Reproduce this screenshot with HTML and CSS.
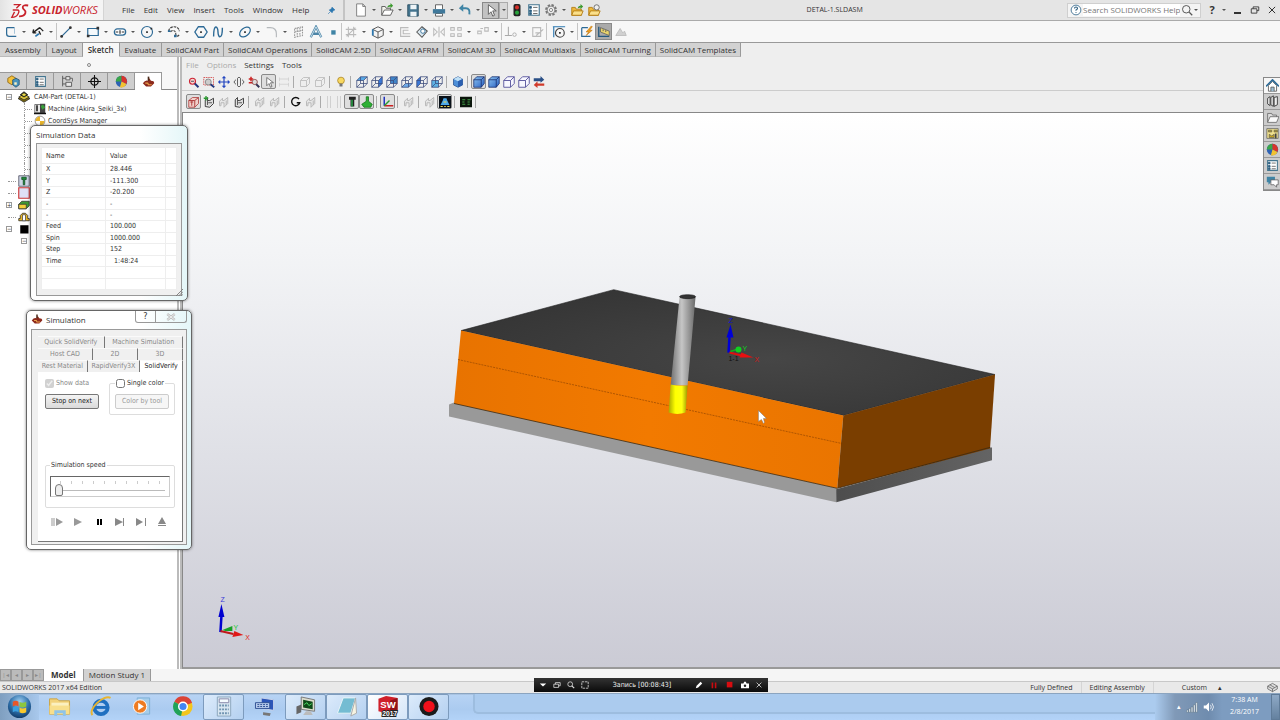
FILE: index.html
```
<!DOCTYPE html>
<html lang="en">
<head>
  <meta charset="UTF-8">
  <meta name="viewport" content="width=device-width, initial-scale=1.0">
  <title>DETAL-1.SLDASM</title>
  <link rel="stylesheet" href="styles.css">
</head>
<body>
  <!-- icon sprite -->
  <svg class="sprite" aria-hidden="true">
    <defs>
      <linearGradient id="blueFace" x1="0" y1="0" x2="1" y2="1"><stop offset="0" stop-color="#8cc4f0"/><stop offset="1" stop-color="#2a62c4"/></linearGradient>
      <radialGradient id="orb" cx=".5" cy=".3" r=".7"><stop offset="0" stop-color="#9fd0f2"/><stop offset=".6" stop-color="#2c6da8"/><stop offset="1" stop-color="#123d6b"/></radialGradient>
      <radialGradient id="topFace" cx=".58" cy=".55" r=".6"><stop offset="0" stop-color="#464646"/><stop offset="1" stop-color="#363636"/></radialGradient>
      <linearGradient id="frontFace"><stop offset="0" stop-color="#e87300"/><stop offset=".5" stop-color="#f27a00"/><stop offset="1" stop-color="#ea7500"/></linearGradient>
      <linearGradient id="plateSide"><stop offset="0" stop-color="#4d4d4d"/><stop offset="1" stop-color="#646464"/></linearGradient>
      <linearGradient id="shank"><stop offset="0" stop-color="#707070"/><stop offset=".45" stop-color="#c6c6c6"/><stop offset="1" stop-color="#6a6a6a"/></linearGradient>
      <linearGradient id="flute"><stop offset="0" stop-color="#a8a800"/><stop offset=".35" stop-color="#ffff00"/><stop offset=".7" stop-color="#ffff10"/><stop offset="1" stop-color="#989800"/></linearGradient>
    </defs>
    <symbol id="i-sketch" viewBox="0 0 16 16"><path d="M3 3v7q0 3 3 3h8M3 3h9" fill="none" stroke="#2d6a96" stroke-width="1.4"/><path d="M12 3v7" stroke="#9bbdd3" stroke-width="1"/></symbol>
    <symbol id="i-dim" viewBox="0 0 16 16"><path d="M2 9L10 3M2 9l1-4M2 9h4M10 3l4 4M9 7l2 4" fill="none" stroke="#222" stroke-width="1.500"/><path d="M5 13l4-3" stroke="#2d78b0" stroke-width="2"/></symbol>
    <symbol id="i-line" viewBox="0 0 16 16"><path d="M3 13L13 3" stroke="#2d6a96" stroke-width="1.4"/><circle cx="3" cy="13" r="1.6" fill="#333"/><circle cx="13" cy="3" r="1.6" fill="#333"/></symbol>
    <symbol id="i-rect" viewBox="0 0 16 16"><path d="M2 4h12v8H2z" fill="#f4f9fc" stroke="#2d6a96" stroke-width="1.4"/><path d="M1 11h3v3H1zM12 2h3v3h-3z" fill="#333"/></symbol>
    <symbol id="i-slot" viewBox="0 0 16 16"><rect x="1.500" y="4.500" width="13" height="7" rx="3.500" fill="#fff" stroke="#2d6a96" stroke-width="1.400"/><path d="M3 8h3M10 8h3M8 6v4" stroke="#333" stroke-width="1.400"/></symbol>
    <symbol id="i-circle" viewBox="0 0 16 16"><circle cx="8" cy="8" r="6.300" fill="none" stroke="#2d6a96" stroke-width="1.300"/><path d="M7 7h2v2H7zM12 3h2v2h-2z" fill="#333"/></symbol>
    <symbol id="i-arc" viewBox="0 0 16 16"><path d="M2 7a6 5 0 0 1 12 0M4 8c2-3 6-2 6 2s3 3 4 1" fill="none" stroke="#444" stroke-width="1.300" stroke-dasharray="3 1"/><path d="M8 11h3v3H8zM1 6h3v2H1z" fill="#2d6a96"/></symbol>
    <symbol id="i-hex" viewBox="0 0 16 16"><path d="M5 2h6l4 6-4 6H5L1 8z" fill="none" stroke="#2d6a96" stroke-width="1.500"/><path d="M7 7h2v2H7z" fill="#333"/></symbol>
    <symbol id="i-spline" viewBox="0 0 16 16"><path d="M3 13C3-2 8 1 8 8s5 9 5-5" fill="none" stroke="#2d6a96" stroke-width="1.600"/></symbol>
    <symbol id="i-ellipse" viewBox="0 0 16 16"><ellipse cx="8" cy="8" rx="7" ry="4.500" transform="rotate(-40 8 8)" fill="none" stroke="#2d6a96" stroke-width="1.400"/><path d="M7 7h2v2H7z" fill="#333"/></symbol>
    <symbol id="i-fillet" viewBox="0 0 16 16"><path d="M2 3h4q7 0 7 7v4" fill="none" stroke="#b5b9bc" stroke-width="1.300"/></symbol>
    <symbol id="i-plane" viewBox="0 0 16 16"><path d="M3 4l9-2v10l-9 2zM6 3v11M9 3v10M3 8l9-2" fill="none" stroke="#999" stroke-width="1.200" stroke-dasharray="2 1"/></symbol>
    <symbol id="i-text" viewBox="0 0 16 16"><path d="M2 14L8 2l6 12M5 10h6" fill="none" stroke="#4d86a8" stroke-width="2.600"/><path d="M2 14L8 2l6 12" fill="none" stroke="#dcebf3" stroke-width="1"/></symbol>
    <symbol id="i-point" viewBox="0 0 16 16"><path d="M6 6h5v5H6z" fill="#3f84a5"/></symbol>
    <symbol id="i-trim" viewBox="0 0 16 16"><path d="M2 5h12M2 11h12M5 2v12M11 2v12M3 13L13 3" fill="none" stroke="#bbb" stroke-width="1.200"/></symbol>
    <symbol id="i-cube" viewBox="0 0 16 16"><path d="M2 5l6-3 6 3v7l-6 3-6-3zM2 5l6 3 6-3M8 8v7" fill="#f4f4f4" stroke="#555" stroke-width="1.100"/><path d="M2 5v7" stroke="#2d78b0" stroke-width="2"/></symbol>
    <symbol id="i-offset" viewBox="0 0 16 16"><path d="M12 3H3v10h11M12 6H6v4h8" fill="none" stroke="#bbb" stroke-width="1.300"/></symbol>
    <symbol id="i-convert" viewBox="0 0 16 16"><path d="M2 8l6-6 6 5-6 7z" fill="#dce9f1" stroke="#555" stroke-width="1.200"/><circle cx="9" cy="7" r="2.500" fill="#fff" stroke="#2d6a96"/></symbol>
    <symbol id="i-mirror" viewBox="0 0 16 16"><path d="M8 2v12M2 4v8l4-4zM14 4v8l-4-4z" fill="none" stroke="#bbb" stroke-width="1.200"/></symbol>
    <symbol id="i-pattern" viewBox="0 0 16 16"><path d="M2 3h4v3H2zM10 3h4v3h-4zM2 10h4v3H2zM10 10h4v3h-4z" fill="none" stroke="#bbb" stroke-width="1.200"/></symbol>
    <symbol id="i-move" viewBox="0 0 16 16"><path d="M2 7h4v3H2zM10 3h4v4h-4zM5 4h3" fill="none" stroke="#bbb" stroke-width="1.200"/></symbol>
    <symbol id="i-rel" viewBox="0 0 16 16"><path d="M5 2v10M1 12h8" fill="none" stroke="#aaa" stroke-width="1.200"/><circle cx="12" cy="11" r="2" fill="none" stroke="#aaa"/></symbol>
    <symbol id="i-repair" viewBox="0 0 16 16"><path d="M2 3h9v10H2zM6 12l8-7M5 9h6" fill="none" stroke="#bbb" stroke-width="1.300"/></symbol>
    <symbol id="i-snap" viewBox="0 0 16 16"><circle cx="9" cy="9" r="5" fill="none" stroke="#444" stroke-width="1.300"/><path d="M1 2h14M2 2v12" stroke="#2d78b0" stroke-width="1.300"/><path d="M8 8h2v2H8z" fill="#333"/></symbol>
    <symbol id="i-rapid" viewBox="0 0 16 16"><path d="M2 3h7M2 3v10h10" fill="none" stroke="#2d6a96" stroke-width="1.400"/><path d="M13 1L7 8h3l-3 4 7-6h-3l3-4z" fill="#f0a020" stroke="#b56a00" stroke-width=".6"/></symbol>
    <symbol id="i-ruler" viewBox="0 0 16 16"><path d="M2 2v11h12" fill="none" stroke="#24587e" stroke-width="1.500"/><path d="M4 3l10 4v5L4 8z" fill="#e9d46c" stroke="#555" stroke-width=".8"/><path d="M7 5v2M10 6v2" stroke="#555"/></symbol>
    <symbol id="i-grey" viewBox="0 0 16 16"><path d="M2 12l5-8 3 5 2-2 2 5z" fill="#d0d0d0" stroke="#bbb"/></symbol>
    <symbol id="i-pin" viewBox="0 0 16 16"><path d="M9 2l5 5-3 1-2 4-5-5 4-2zM2 14l4-4" fill="#2d78b0" stroke="#2d78b0" stroke-width="1.200"/></symbol>
    <symbol id="i-new" viewBox="0 0 16 16"><path d="M3 1h7l3 3v11H3zM10 1v3h3" fill="#fff" stroke="#777"/></symbol>
    <symbol id="i-open" viewBox="0 0 16 16"><path d="M2 14V4h4l1 2h5v3" fill="#f4f4ee" stroke="#555"/><path d="M2 14l3-6h10l-3 6z" fill="#fff" stroke="#555"/><path d="M8 5q1-3 4-3V0l3 3-3 3V4z" fill="#3d9a2f"/></symbol>
    <symbol id="i-save" viewBox="0 0 16 16"><path d="M2 2h12v13H2z" fill="#44758f" stroke="#2a4d60"/><path d="M5 2h7v5H5zM5 10h7v5H5z" fill="#eef4f7"/></symbol>
    <symbol id="i-print" viewBox="0 0 16 16"><path d="M4 7V2h8v5M4 12h8v3H4z" fill="#fff" stroke="#555"/><path d="M1 7h14v5H1z" fill="#3f789a"/></symbol>
    <symbol id="i-undo" viewBox="0 0 16 16"><path d="M4 6h5q5 0 4 7" fill="none" stroke="#3f84a5" stroke-width="2.200"/><path d="M6 1v9L1 6z" fill="#3f84a5"/></symbol>
    <symbol id="i-cursor" viewBox="0 0 16 16"><path d="M5 2v11l3-3 2 5 2-1-2-5h4z" fill="#fff" stroke="#555"/></symbol>
    <symbol id="i-light" viewBox="0 0 16 16"><rect x="4" y="1" width="8" height="14" rx="2" fill="#222"/><circle cx="8" cy="5" r="2.300" fill="#d6302a"/><circle cx="8" cy="11" r="2.300" fill="#28a33c"/></symbol>
    <symbol id="i-list" viewBox="0 0 16 16"><path d="M2 2h12v12H2z" fill="#fff" stroke="#44758f" stroke-width="1.300"/><path d="M3 4h2v2H3zM3 8h2v2H3zM3 11h2v2H3z" fill="#2d5f80" stroke="#2d5f80"/><path d="M7 5h5M7 9h5M7 12h5" stroke="#555"/></symbol>
    <symbol id="i-gear" viewBox="0 0 16 16"><circle cx="8" cy="8" r="5.500" fill="none" stroke="#777" stroke-width="2.500" stroke-dasharray="2.600 1.700"/><circle cx="8" cy="8" r="4.500" fill="#eee" stroke="#777"/><circle cx="8" cy="8" r="1.800" fill="#fff" stroke="#777"/></symbol>
    <symbol id="i-globe" viewBox="0 0 16 16"><path d="M1 6l7-4 7 4v4l-7 4-7-4z" fill="#ddd" stroke="#555"/><path d="M1 6l7 4 7-4M8 10v4M4 4l7 4" fill="none" stroke="#555"/></symbol>
    <symbol id="i-folder" viewBox="0 0 16 16"><path d="M2 14V5h4l1 2h6v7z" fill="#f0b93a" stroke="#b07a12"/><path d="M2 14l2-5h11l-2 5z" fill="#fbe08a" stroke="#b07a12"/><path d="M9 6q0-3 3-3V1l3 3-3 3V5z" fill="#3d9a2f"/></symbol>
    <symbol id="i-folder2" viewBox="0 0 16 16"><path d="M2 14V5h4l1 2h6v7z" fill="#f0b93a" stroke="#b07a12"/><path d="M2 14l2-5h11l-2 5z" fill="#fbe08a" stroke="#b07a12"/><circle cx="11" cy="5" r="3" fill="#eee" stroke="#666"/></symbol>
    <symbol id="i-help" viewBox="0 0 16 16"><circle cx="8" cy="8" r="6.500" fill="#fff" stroke="#3d6f92" stroke-width="1.200"/><path d="M6 6q0-2 2-2t2 2q0 1-2 2v1M8 11v1" fill="none" stroke="#2d5f80" stroke-width="1.500"/></symbol>
    <symbol id="i-mag" viewBox="0 0 16 16"><circle cx="7" cy="7" r="5" fill="none" stroke="#555" stroke-width="1.300"/><path d="M11 11l4 4" stroke="#555" stroke-width="1.600"/></symbol>
    <symbol id="i-restore" viewBox="0 0 16 16"><path d="M5 6V3h9v6h-3M2 6h9v7H2z" fill="none" stroke="#333" stroke-width="1.400"/></symbol>
    <symbol id="i-close" viewBox="0 0 16 16"><path d="M3 3l10 10M13 3L3 13" stroke="#333" stroke-width="1.600"/></symbol>
    <symbol id="i-assembly" viewBox="0 0 16 16"><path d="M1 4l5-3 5 3v5l-5 3-5-3z" fill="#f3c03b" stroke="#8a6410"/><path d="M7 6l4-2 4 2v6l-4 3-4-3z" fill="#4b94bd" stroke="#27556f"/><path d="M9 9h3v3H9z" fill="#fff3c0"/></symbol>
    <symbol id="i-tree" viewBox="0 0 16 16"><path d="M2 1v13M2 4h4M2 11h4M6 2h5v4H6zM6 9h7v5H6zM11 4h3v4" fill="#e6e6e6" stroke="#555" stroke-width="1.100"/></symbol>
    <symbol id="i-target" viewBox="0 0 16 16"><circle cx="8" cy="8" r="4.500" fill="none" stroke="#111" stroke-width="1.500"/><path d="M8 0v16M0 8h16" stroke="#111" stroke-width="1.300"/></symbol>
    <symbol id="i-ball" viewBox="0 0 16 16"><circle cx="8" cy="8" r="7" fill="#2e62b4"/><path d="M8 8V1a7 7 0 0 0-7 7z" fill="#3aa648"/><path d="M8 8V1a7 7 0 0 1 6 10z" fill="#d8342c"/><path d="M8 8l6 3a7 7 0 0 1-8 4z" fill="#f2c230"/></symbol>
    <symbol id="i-cam" viewBox="0 0 16 16"><path d="M1 10q3-4 6-3l2-3 2 3q4 0 4 3l-4 4H5z" fill="#8d2a1d"/><path d="M7 2h2v5H7z" fill="#4a2a1a"/><path d="M4 10h3l1 2h4" stroke="#e9a04a" stroke-width="1.500" fill="none"/></symbol>
    <symbol id="i-part" viewBox="0 0 16 16"><path d="M0 10l8-4 8 4-8 5z" fill="#7d6a10" stroke="#222"/><path d="M1 8l7-4 7 4-7 4z" fill="#d8c23a" stroke="#222"/><path d="M3 5l5-4 5 4-5 3z" fill="#3a3a20" stroke="#111"/><path d="M5 5l3-2 3 2-3 2z" fill="#e8d84a"/></symbol>
    <symbol id="i-machine" viewBox="0 0 16 16"><path d="M1 2h8v11H1z" fill="#e8e8e8" stroke="#555"/><path d="M8 1h7v13H8z" fill="#444"/><path d="M0 14h16M4 3v8" stroke="#111" stroke-width="2"/><path d="M9 4l3-2 3 4-4 3z" fill="#38a03a"/></symbol>
    <symbol id="i-coord" viewBox="0 0 16 16"><circle cx="8" cy="8" r="6.500" fill="#fff" stroke="#777"/><path d="M8 8V2a6 6 0 0 0-6 6zM8 8v6a6 6 0 0 0 6-6z" fill="#e9b62e"/></symbol>
    <symbol id="i-tools" viewBox="0 0 16 16"><path d="M1 1h14v14H1z" fill="#cfd6e6" stroke="#445"/><path d="M5 3h6v3H9v7H7V6H5z" fill="#1f8a3a" stroke="#0d4d1e"/></symbol>
    <symbol id="i-sheet" viewBox="0 0 16 16"><path d="M1 1h14v14H1z" fill="#dfe0f5" stroke="#c33" stroke-width="1.500"/></symbol>
    <symbol id="i-stock" viewBox="0 0 16 16"><path d="M1 7l4-4h10v6l-4 4H1z" fill="#3f9a32" stroke="#333"/><path d="M1 7h10v6H1z" fill="#f3cf3a" stroke="#333"/></symbol>
    <symbol id="i-fixture" viewBox="0 0 16 16"><path d="M1 13h14v-3h-2V6l-3-3H6L3 6v4H1z" fill="#e8b524" stroke="#222"/><path d="M6 5h4v8H6z" fill="#fff" stroke="#444"/></symbol>
    <symbol id="i-black" viewBox="0 0 16 16"><path d="M3 3h11v11H3z" fill="#000"/></symbol>
    <symbol id="i-zoomfit" viewBox="0 0 16 16"><circle cx="6" cy="7" r="4" fill="#f8d4d0" stroke="#c23" stroke-width="1.500"/><path d="M9 10l5 5" stroke="#23367a" stroke-width="2.500"/><path d="M4 7h4" stroke="#223"/></symbol>
    <symbol id="i-zoomarea" viewBox="0 0 16 16"><path d="M1 2h13v10H1z" fill="none" stroke="#c33" stroke-dasharray="2 1"/><circle cx="7" cy="8" r="4" fill="#ccc" stroke="#777"/><path d="M10 11l5 4" stroke="#23367a" stroke-width="2.500"/></symbol>
    <symbol id="i-pan" viewBox="0 0 16 16"><path d="M8 1v14M1 8h14" stroke="#2346c0" stroke-width="1.600"/><path d="M8 0l3 3H5zM8 16l3-3H5zM0 8l3-3v6zM16 8l-3-3v6z" fill="#2346c0"/></symbol>
    <symbol id="i-rotate" viewBox="0 0 16 16"><path d="M6 3q2-3 4 0v10q-2 3-4 0zM4 5q-5 3 0 6M12 5q5 3 0 6" fill="none" stroke="#555" stroke-width="1.200"/></symbol>
    <symbol id="i-zoomin" viewBox="0 0 16 16"><path d="M1 4h6M4 1v6M1 9h6" stroke="#c22" stroke-width="2"/><circle cx="9" cy="8" r="3.500" fill="#ddd" stroke="#833"/><path d="M11 11l4 4" stroke="#335" stroke-width="2.500"/></symbol>
    <symbol id="i-measure" viewBox="0 0 16 16"><path d="M2 4h12M2 11h12M2 2v5M14 2v5M2 9v5M14 9v5" stroke="#ccc" fill="none"/></symbol>
    <symbol id="i-gcube" viewBox="0 0 16 16"><path d="M2 6l4-4h8v8l-4 4H2zM2 6h8v8M10 6l4-4" fill="#eee" stroke="#bdbdbd" stroke-width="1.200"/></symbol>
    <symbol id="i-bulb" viewBox="0 0 16 16"><circle cx="8" cy="6" r="4.500" fill="#f8d860" stroke="#a88020"/><path d="M6 10h4v4H6z" fill="#777"/></symbol>
    <symbol id="i-wire" viewBox="0 0 16 16"><path d="M1 6l5-5h9v9l-5 5H1zM1 6h9v9M10 6l5-5M6 1v9h9M1 15l5-5" fill="none" stroke="#3a4a7a" stroke-width="1"/></symbol>
    <symbol id="i-v1" viewBox="0 0 16 16"><path d="M1 6l5-5h9l-5 5z" fill="#58a8e6"/><use href="#i-wire"/></symbol>
    <symbol id="i-v2" viewBox="0 0 16 16"><path d="M10 6l5-5v9l-5 5z" fill="#3a78d6"/><use href="#i-wire"/></symbol>
    <symbol id="i-v3" viewBox="0 0 16 16"><path d="M6 1h9v9H6z" fill="#3f84c8"/><use href="#i-wire"/></symbol>
    <symbol id="i-v4" viewBox="0 0 16 16"><path d="M1 15l5-5h9l-5 5z" fill="#6eaae8"/><use href="#i-wire"/></symbol>
    <symbol id="i-v5" viewBox="0 0 16 16"><path d="M1 6l5-5v9l-5 5z" fill="#3a78d6"/><use href="#i-wire"/></symbol>
    <symbol id="i-v6" viewBox="0 0 16 16"><path d="M1 6h9v9H1z" fill="#5fb2e4"/><use href="#i-wire"/></symbol>
    <symbol id="i-iso" viewBox="0 0 16 16"><path d="M2 4l6-3 6 3v8l-6 3-6-3z" fill="#4d8fd8" stroke="#28508f"/><path d="M2 4l6 3 6-3-6-3z" fill="#bfe0f6"/><path d="M8 7l6-3v8l-6 3z" fill="#2b5fb0"/></symbol>
    <symbol id="i-shade" viewBox="0 0 16 16"><path d="M1 5l4-4h10v9l-4 5H1z" fill="url(#blueFace)" stroke="#142a6a"/><path d="M1 5h10v10M11 5l4-4" fill="none" stroke="#142a6a"/></symbol>
    <symbol id="i-hidden" viewBox="0 0 16 16"><path d="M1 6l5-5h9v9l-5 5H1zM1 6h9v9M10 6l5-5" fill="#f7f7ff" stroke="#54509a" stroke-width="1.200"/></symbol>
    <symbol id="i-swap" viewBox="0 0 16 16"><path d="M1 3h9V0l5 5-5 4V7H1z" fill="#2a4f86"/><path d="M15 10H6V7l-5 5 5 4v-3h9z" fill="#d03a2a"/></symbol>
    <symbol id="i-redcube" viewBox="0 0 16 16"><path d="M1 6l5-4h8v8l-5 5H1z" fill="#f1d0ca" stroke="#a33"/><path d="M1 6h8v9M9 6l5-4M3 8h4M5 7v6" fill="none" stroke="#a33" stroke-width="1.200"/></symbol>
    <symbol id="i-solid" viewBox="0 0 16 16"><path d="M3 5l3-3v4h3l5-3v7l-5 5-6-1z" fill="#ddd" stroke="#333" stroke-width="1.200"/><path d="M7 9h5M6 6v6" stroke="#333"/></symbol>
    <symbol id="i-solidplus" viewBox="0 0 16 16"><use href="#i-solid"/><path d="M1 3h6M4 0v6" stroke="#2a9a30" stroke-width="1.800"/></symbol>
    <symbol id="i-gsolid" viewBox="0 0 16 16"><path d="M2 7l4-4v3h2l5-4v8l-5 5V9H4v4H2zM11 6v6" fill="#e6e6e6" stroke="#b4b4b4" stroke-width="1.200"/></symbol>
    <symbol id="i-reset" viewBox="0 0 16 16"><path d="M12 4a5.500 5.500 0 1 0 1 5H9" fill="none" stroke="#111" stroke-width="1.800"/></symbol>
    <symbol id="i-holder" viewBox="0 0 16 16"><path d="M4 1h9v4h-2v9H6V5H4z" fill="#222"/><path d="M7 5h2v9H7z" fill="#2aa84a"/></symbol>
    <symbol id="i-green" viewBox="0 0 16 16"><path d="M7 1h3v6l5 4-2 4H4l-3-4 6-4z" fill="#2db034" stroke="#14701a"/></symbol>
    <symbol id="i-axes" viewBox="0 0 16 16"><path d="M3 1v12" stroke="#2334c0" stroke-width="2"/><path d="M3 13h12" stroke="#c22" stroke-width="2"/><path d="M3 13l7-7" stroke="#2a9a30" stroke-width="2"/></symbol>
    <symbol id="i-stockview" viewBox="0 0 16 16"><path d="M0 0h16v16H0z" fill="#081018"/><path d="M2 12l3-6 1-3h4l1 3 3 6z" fill="#4aa8ea"/><path d="M2 14h3M7 14h2M11 14h3M6 8h4" stroke="#f3dc50" stroke-width="1.500"/></symbol>
    <symbol id="i-compare" viewBox="0 0 16 16"><path d="M0 1h16v14H0z" fill="#0b160c"/><path d="M3 5h4M3 8h3M3 11h4M10 5h4M10 8h3M10 11h3" stroke="#46a24a" stroke-width="1.500"/></symbol>
    <symbol id="i-home" viewBox="0 0 16 16"><path d="M3 8v7h10V8L8 3z" fill="#fff" stroke="#555"/><path d="M0 9l8-8 8 8" fill="none" stroke="#2d6a96" stroke-width="2"/><path d="M6 15v-5h4v5" fill="#9fc0d4" stroke="#555"/></symbol>
    <symbol id="i-books" viewBox="0 0 16 16"><path d="M2 4l3-2v11l-3-2zM6 3l3-2v13l-3-2zM10 3l4-1v10l-4 2z" fill="#eee" stroke="#444" stroke-width="1.200"/></symbol>
    <symbol id="i-gfolder" viewBox="0 0 16 16"><path d="M2 14V3h5l1 2h5v3" fill="#ddd" stroke="#666"/><path d="M2 14l3-7h11l-3 7z" fill="#fafafa" stroke="#666"/></symbol>
    <symbol id="i-palette" viewBox="0 0 16 16"><path d="M1 2h14v12H1z" fill="#f0e08c" stroke="#666"/><path d="M3 4h4v2H3zM10 4h4v2h-4zM4 9l3 2 3-2v4H4z" fill="#d0a818" stroke="#665"/><path d="M12 8v6" stroke="#444" stroke-width="2"/></symbol>
    <symbol id="i-chat" viewBox="0 0 16 16"><path d="M1 2h10v7H6l-3 3V9H1z" fill="#3f84a5"/><path d="M6 6h9v6h-2v3l-3-3H6z" fill="#fff" stroke="#666"/></symbol>
  </svg>

  <header class="titlebar">
    <div class="brand">
      <svg class="brand-mark" viewBox="0 0 22 17" aria-hidden="true"><path d="M4 2h7l-4 4M3 8h5q3 0 1 4-2 4-7 4l3-6" fill="none" stroke="#c8232c" stroke-width="1.500"/><path d="M20 3q-6-1-6 2c0 3 4 3 3 6q-1 4-7 4" fill="none" stroke="#c8232c" stroke-width="2"/></svg>
      <span class="brand-name"><b>SOLID</b>WORKS</span>
    </div>
    <nav class="main-menu">
      <a href="#">File</a><a href="#">Edit</a><a href="#">View</a><a href="#">Insert</a><a href="#">Tools</a><a href="#">Window</a><a href="#">Help</a>
    </nav>
    <button class="tool pin" aria-label="Pin menu"><svg><use href="#i-pin"/></svg></button>
    <div class="quick">
      <button class="tool" aria-label="New"><svg><use href="#i-new"/></svg></button><button class="drop" aria-label="New options"></button>
      <button class="tool" aria-label="Open"><svg><use href="#i-open"/></svg></button><button class="drop" aria-label="Open options"></button>
      <button class="tool" aria-label="Save"><svg><use href="#i-save"/></svg></button><button class="drop" aria-label="Save options"></button>
      <button class="tool" aria-label="Print"><svg><use href="#i-print"/></svg></button><button class="drop" aria-label="Print options"></button>
      <button class="tool" aria-label="Undo"><svg><use href="#i-undo"/></svg></button><button class="drop" aria-label="Undo options"></button>
      <button class="tool on" aria-label="Select"><svg><use href="#i-cursor"/></svg></button><button class="drop boxed" aria-label="Select options"></button>
      <button class="tool" aria-label="Rebuild"><svg><use href="#i-light"/></svg></button>
      <button class="tool" aria-label="File properties"><svg><use href="#i-list"/></svg></button>
      <button class="tool" aria-label="Options"><svg><use href="#i-gear"/></svg></button><button class="drop" aria-label="More options"></button>
      <button class="tool" aria-label="Open folder"><svg><use href="#i-folder"/></svg></button>
      <button class="tool" aria-label="Recent"><svg><use href="#i-folder2"/></svg></button>
    </div>
    <h1 class="doc-title">DETAL-1.SLDASM</h1>
    <form class="search">
      <svg><use href="#i-help"/></svg>
      <input type="text" aria-label="Search help" placeholder="Search SOLIDWORKS Help">
      <svg><use href="#i-mag"/></svg>
      <span class="caret"></span>
    </form>
    <div class="win-buttons">
      <button class="help-btn" aria-label="Help">?</button><button class="drop" aria-label="Help options"></button>
      <button class="minimize" aria-label="Minimize"></button>
      <button aria-label="Restore"><svg><use href="#i-restore"/></svg></button>
      <button aria-label="Close"><svg><use href="#i-close"/></svg></button>
    </div>
  </header>

  <div class="sketch-bar">
    <button class="tool" aria-label="Sketch"><svg><use href="#i-sketch"/></svg></button><button class="drop" aria-label="Sketch options"></button>
    <button class="tool" aria-label="Smart dimension"><svg><use href="#i-dim"/></svg></button><button class="drop" aria-label="Dimension options"></button>
    <span class="rule"></span>
    <button class="tool" aria-label="Line"><svg><use href="#i-line"/></svg></button><button class="drop" aria-label="Line options"></button>
    <button class="tool" aria-label="Rectangle"><svg><use href="#i-rect"/></svg></button><button class="drop" aria-label="Rectangle options"></button>
    <button class="tool" aria-label="Slot"><svg><use href="#i-slot"/></svg></button><button class="drop" aria-label="Slot options"></button>
    <button class="tool" aria-label="Circle"><svg><use href="#i-circle"/></svg></button><button class="drop" aria-label="Circle options"></button>
    <button class="tool" aria-label="Arc"><svg><use href="#i-arc"/></svg></button><button class="drop" aria-label="Arc options"></button>
    <button class="tool" aria-label="Polygon"><svg><use href="#i-hex"/></svg></button>
    <button class="tool" aria-label="Spline"><svg><use href="#i-spline"/></svg></button><button class="drop" aria-label="Spline options"></button>
    <button class="tool" aria-label="Ellipse"><svg><use href="#i-ellipse"/></svg></button><button class="drop" aria-label="Ellipse options"></button>
    <button class="tool" aria-label="Fillet"><svg><use href="#i-fillet"/></svg></button><button class="drop" aria-label="Fillet options"></button>
    <button class="tool" aria-label="Plane"><svg><use href="#i-plane"/></svg></button>
    <button class="tool" aria-label="Text"><svg><use href="#i-text"/></svg></button>
    <button class="tool" aria-label="Point"><svg><use href="#i-point"/></svg></button>
    <span class="rule"></span>
    <button class="tool" aria-label="Trim"><svg><use href="#i-trim"/></svg></button><button class="drop" aria-label="Trim options"></button>
    <button class="tool" aria-label="Convert entities"><svg><use href="#i-cube"/></svg></button><button class="drop" aria-label="Convert options"></button>
    <button class="tool" aria-label="Offset"><svg><use href="#i-offset"/></svg></button>
    <button class="tool" aria-label="Offset on surface"><svg><use href="#i-convert"/></svg></button>
    <button class="tool" aria-label="Mirror"><svg><use href="#i-mirror"/></svg></button>
    <button class="tool" aria-label="Pattern"><svg><use href="#i-pattern"/></svg></button><button class="drop" aria-label="Pattern options"></button>
    <button class="tool" aria-label="Move"><svg><use href="#i-move"/></svg></button><button class="drop" aria-label="Move options"></button>
    <span class="rule"></span>
    <button class="tool" aria-label="Relations"><svg><use href="#i-rel"/></svg></button><button class="drop" aria-label="Relation options"></button>
    <button class="tool" aria-label="Repair"><svg><use href="#i-repair"/></svg></button>
    <span class="rule wide"></span>
    <button class="tool" aria-label="Quick snaps"><svg><use href="#i-snap"/></svg></button><button class="drop" aria-label="Snap options"></button>
    <span class="rule"></span>
    <button class="tool" aria-label="Rapid sketch"><svg><use href="#i-rapid"/></svg></button>
    <button class="tool on" aria-label="Instant 2D"><svg><use href="#i-ruler"/></svg></button>
    <button class="tool" aria-label="Shaded contours"><svg><use href="#i-grey"/></svg></button>
  </div>

  <nav class="ribbon-tabs">
    <a href="#">Assembly</a><a href="#">Layout</a><a href="#" class="current">Sketch</a><a href="#">Evaluate</a><a href="#">SolidCAM Part</a><a href="#">SolidCAM Operations</a><a href="#">SolidCAM 2.5D</a><a href="#">SolidCAM AFRM</a><a href="#">SolidCAM 3D</a><a href="#">SolidCAM Multiaxis</a><a href="#">SolidCAM Turning</a><a href="#">SolidCAM Templates</a>
  </nav>

  <main class="workspace">
    <aside class="side">
      <div class="side-grip"><i></i></div>
      <div class="side-tabs">
        <button aria-label="Assembly tree"><svg><use href="#i-assembly"/></svg></button>
        <button aria-label="Properties"><svg><use href="#i-list"/></svg></button>
        <button aria-label="Configurations"><svg><use href="#i-tree"/></svg></button>
        <button aria-label="DimXpert"><svg><use href="#i-target"/></svg></button>
        <button aria-label="Display"><svg><use href="#i-ball"/></svg></button>
        <button aria-label="CAM tree" class="current"><svg><use href="#i-cam"/></svg></button>
      </div>
      <ul class="cam-tree">
        <li><span class="box">−</span><svg><use href="#i-part"/></svg>CAM-Part (DETAL-1)</li>
        <li class="child"><svg><use href="#i-machine"/></svg>Machine (Akira_Seiki_3x)</li>
        <li class="child"><svg><use href="#i-coord"/></svg>CoordSys Manager</li>
        <li class="child"><svg><use href="#i-sheet"/></svg></li>
        <li class="child"><svg><use href="#i-stock"/></svg></li>
        <li class="child"></li>
        <li class="child"></li>
        <li><span class="dash"></span><svg><use href="#i-tools"/></svg></li>
        <li><span class="dash"></span><svg><use href="#i-sheet"/></svg></li>
        <li><span class="box">+</span><svg><use href="#i-stock"/></svg></li>
        <li><span class="dash"></span><svg><use href="#i-fixture"/></svg></li>
        <li><span class="box">−</span><svg><use href="#i-black"/></svg></li>
        <li class="inner"><span class="box">−</span></li>
      </ul>
    </aside>

    <section class="sim">
      <nav class="sim-menu">
        <a href="#" class="off">File</a><a href="#" class="off">Options</a><a href="#">Settings</a><a href="#">Tools</a>
      </nav>
      <div class="sim-bar">
        <button class="tool" aria-label="Zoom to fit"><svg><use href="#i-zoomfit"/></svg></button>
        <button class="tool" aria-label="Zoom to area"><svg><use href="#i-zoomarea"/></svg></button>
        <button class="tool" aria-label="Pan"><svg><use href="#i-pan"/></svg></button>
        <button class="tool" aria-label="Rotate"><svg><use href="#i-rotate"/></svg></button>
        <button class="tool" aria-label="Zoom"><svg><use href="#i-zoomin"/></svg></button>
        <button class="tool on" aria-label="Select"><svg><use href="#i-cursor"/></svg></button>
        <button class="tool" aria-label="Measure"><svg><use href="#i-measure"/></svg></button>
        <span class="rule"></span>
        <button class="tool" aria-label="Section"><svg><use href="#i-gcube"/></svg></button>
        <button class="tool" aria-label="Clip"><svg><use href="#i-gcube"/></svg></button>
        <span class="rule"></span>
        <button class="tool" aria-label="Light"><svg><use href="#i-bulb"/></svg></button>
        <span class="rule"></span>
        <button class="tool" aria-label="Top view"><svg><use href="#i-v1"/></svg></button>
        <button class="tool" aria-label="Right view"><svg><use href="#i-v2"/></svg></button>
        <button class="tool" aria-label="Back view"><svg><use href="#i-v3"/></svg></button>
        <button class="tool" aria-label="Bottom view"><svg><use href="#i-v4"/></svg></button>
        <button class="tool" aria-label="Left view"><svg><use href="#i-v5"/></svg></button>
        <button class="tool" aria-label="Front view"><svg><use href="#i-v6"/></svg></button>
        <span class="rule"></span>
        <button class="tool" aria-label="Isometric"><svg><use href="#i-iso"/></svg></button>
        <span class="rule"></span>
        <button class="tool on" aria-label="Shaded"><svg><use href="#i-shade"/></svg></button>
        <button class="tool" aria-label="Shaded with edges"><svg><use href="#i-shade"/></svg></button>
        <button class="tool" aria-label="Wireframe"><svg><use href="#i-hidden"/></svg></button>
        <button class="tool" aria-label="Hidden lines removed"><svg><use href="#i-hidden"/></svg></button>
        <button class="tool" aria-label="Swap"><svg><use href="#i-swap"/></svg></button>
      </div>
      <div class="sim-bar second">
        <button class="tool on" aria-label="Show stock"><svg><use href="#i-redcube"/></svg></button>
        <button class="tool" aria-label="Add part"><svg><use href="#i-solidplus"/></svg></button>
        <button class="tool" aria-label="Remove part"><svg><use href="#i-gsolid"/></svg></button>
        <button class="tool" aria-label="Part"><svg><use href="#i-solid"/></svg></button>
        <span class="rule"></span>
        <button class="tool" aria-label="Split"><svg><use href="#i-gsolid"/></svg></button>
        <button class="tool" aria-label="Join"><svg><use href="#i-gsolid"/></svg></button>
        <span class="rule"></span>
        <button class="tool" aria-label="Reset"><svg><use href="#i-reset"/></svg></button>
        <button class="tool" aria-label="Compare stock"><svg><use href="#i-gsolid"/></svg></button>
        <span class="rule"></span><span class="grip"></span><span class="grip"></span>
        <button class="tool on" aria-label="Tool holder"><svg><use href="#i-holder"/></svg></button>
        <button class="tool on" aria-label="Fixture"><svg><use href="#i-green"/></svg></button>
        <span class="rule"></span>
        <button class="tool on" aria-label="Axes"><svg><use href="#i-axes"/></svg></button>
        <span class="rule"></span>
        <button class="tool" aria-label="Target"><svg><use href="#i-gsolid"/></svg></button>
        <span class="rule"></span>
        <button class="tool" aria-label="Cut"><svg><use href="#i-gsolid"/></svg></button>
        <button class="tool on" aria-label="Stock view"><svg><use href="#i-stockview"/></svg></button>
        <span class="rule"></span>
        <button class="tool" aria-label="Compare"><svg><use href="#i-compare"/></svg></button>
        <span class="rule"></span>
      </div>
      <div class="viewport">
        <svg class="scene" viewBox="183 112 1098 555" role="img" aria-label="Stock, fixture plate and end mill">
          <!-- plate -->
          <path d="M449 404l5-2 384 86-1 14-388-86z" fill="#999"/>
          <path d="M837 489l154-42 2 0v13l-156 42z" fill="url(#plateSide)"/>
          <!-- stock -->
          <path d="M461 330l153-41 382 85-152 41z" fill="url(#topFace)" stroke="#222" stroke-width=".6"/>
          <path d="M461 330l383 85-6 73-384-85z" fill="url(#frontFace)"/>
          <path d="M844 415l152-41-5 74-153 40z" fill="#7a3e00"/>
          <path d="M454 403l384 85 153-41" fill="none" stroke="#3c2a10" stroke-width=".8"/>
          <path d="M458 359l384 84" stroke="#a04c00" stroke-width=".8" stroke-dasharray="2 1"/>
          <!-- tool -->
          <path d="M680 296h16l-8 89h-17z" fill="url(#shank)"/>
          <path d="M671 384q8 2 17 1l-2 27q-8 3-17 0z" fill="url(#flute)"/>
          <ellipse cx="688" cy="296" rx="8" ry="2" fill="#333" stroke="#111" stroke-width=".6"/>
          <!-- part origin -->
          <path d="M729 352l1-16" stroke="#0000d8" stroke-width="2.500"/><path d="M731 324l3 13h-7z" fill="#0000d8"/>
          <path d="M730 352l12 3" stroke="#e01010" stroke-width="2"/><path d="M754 357l-14 0 2-5z" fill="#e81010"/>
          <path d="M731 351l6-2" stroke="#10b020" stroke-width="1.500"/><circle cx="739" cy="349" r="3" fill="#10d020"/>
          <text x="729" y="322" fill="#1010d0">Z</text><text x="743" y="350" fill="#10d020">Y</text><text x="755" y="361" fill="#d01818">X</text><text x="729" y="360" fill="#111">1-1</text>
          <!-- view triad -->
          <path d="M220 632l1-16" stroke="#0000d0" stroke-width="2.500"/><path d="M221 604l3 13h-6z" fill="#0000d0"/>
          <path d="M220 631l13 3" stroke="#c01818" stroke-width="2"/><path d="M243 635l-11 2 2-6z" fill="#e01818"/>
          <path d="M222 630l10-4v5h-7z" fill="#18a028"/>
          <text x="220" y="602" fill="#3a3ad8">Z</text><text x="233" y="630" fill="#20c830">Y</text><text x="245" y="640" fill="#e02020">X</text>
          <path d="M759 410v11l3-2 2 4 1-1-1-4h3z" fill="#fff" stroke="#777" stroke-width=".5"/>
        </svg>
      </div>
      <div class="task-pane">
        <button class="current" aria-label="Resources"><svg><use href="#i-home"/></svg></button>
        <button aria-label="Design library"><svg><use href="#i-books"/></svg></button>
        <button aria-label="File explorer"><svg><use href="#i-gfolder"/></svg></button>
        <button aria-label="View palette"><svg><use href="#i-palette"/></svg></button>
        <button aria-label="Appearances"><svg><use href="#i-ball"/></svg></button>
        <button aria-label="Custom properties"><svg><use href="#i-list"/></svg></button>
        <button aria-label="Forum"><svg><use href="#i-chat"/></svg></button>
      </div>
    </section>
  </main>

  <div class="model-tabs">
    <span class="tab-nav"><button aria-label="First">|◂</button><button aria-label="Previous">◂</button><button aria-label="Next">▸</button><button aria-label="Last">▸|</button></span>
    <a href="#" class="current">Model</a><a href="#">Motion Study 1</a>
  </div>

  <footer class="status">
    <span class="edition">SOLIDWORKS 2017 x64 Edition</span>
    <span class="cell">Fully Defined</span>
    <span class="cell">Editing Assembly</span>
    <span class="cell units">Custom</span>
    <span class="up">▴</span>
    <svg><use href="#i-globe"/></svg>
  </footer>

  <div class="taskbar">
    <button class="start" aria-label="Start"><svg viewBox="0 0 26 26"><circle cx="13" cy="13" r="12" fill="url(#orb)"/><path d="M6 8q3-2 6 0v5q-3-2-6 0z" fill="#e8572a"/><path d="M13 8q3 2 7 0v5q-4 2-7 0z" fill="#8cc63e"/><path d="M6 14q3-2 6 0v5q-3-2-6 0z" fill="#3aa0e0"/><path d="M13 14q3 2 7 0v5q-4 2-7 0z" fill="#f8c82c"/></svg></button>
    <button class="app" aria-label="Explorer"><svg viewBox="0 0 24 22"><path d="M1 3h8l2 2h11v14H1z" fill="#f2d27a" stroke="#c9a447"/><path d="M3 7h18v4H3z" fill="#fbf0c0"/><path d="M1 10h21v9H1z" fill="#f8df8c"/><path d="M6 21v-6h12v6h-3v-3H9v3z" fill="#8fc4e8"/></svg></button>
    <button class="app" aria-label="Internet Explorer"><svg viewBox="0 0 24 22"><circle cx="12" cy="12" r="7" fill="none" stroke="#1f6fc0" stroke-width="4"/><path d="M6 12h13" stroke="#1f6fc0" stroke-width="3"/><path d="M3 20C-2 14 15-2 22 2" fill="none" stroke="#e8b430" stroke-width="2"/></svg></button>
    <button class="app" aria-label="Media player"><svg viewBox="0 0 24 22"><path d="M7 2h13v17H7z" fill="#a6cdea" stroke="#7fb0d6"/><circle cx="10" cy="11" r="7" fill="#ee7b22" stroke="#fff"/><path d="M8 7l6 4-6 4z" fill="#fff"/></svg></button>
    <button class="app" aria-label="Chrome"><svg viewBox="0 0 24 22"><circle cx="12" cy="11" r="10" fill="#f3c61d"/><path d="M12 11L3 6a10 10 0 0 1 18.500 1z" fill="#db4437"/><path d="M12 11l-2 10A10 10 0 0 1 3 6z" fill="#1fa25a"/><circle cx="12" cy="11" r="4.500" fill="#4285f4" stroke="#fff" stroke-width="1.500"/></svg></button>
    <button class="app open" aria-label="Calculator"><svg viewBox="0 0 24 22"><path d="M5 1h14v20H5z" fill="#d8e6f1" stroke="#8aa6bd"/><path d="M7 3h10v4H7z" fill="#f4fbff" stroke="#88a"/><path d="M7 10h10M7 14h10M7 18h10" stroke="#6f93b0" stroke-width="2" stroke-dasharray="2 1"/></svg></button>
    <button class="app" aria-label="On-screen keyboard"><svg viewBox="0 0 24 22"><path d="M8 2l13 2v11L8 13z" fill="#2c55b8" stroke="#c8d4ea"/><path d="M2 7h15v6H2z" fill="#b9cdee" stroke="#2e4f92"/><path d="M4 9h11M4 11h11" stroke="#2e4f92" stroke-dasharray="2 1"/><path d="M10 17l8 1-1 3-7-1z" fill="#777"/></svg></button>
    <button class="app open" aria-label="System monitor"><svg viewBox="0 0 24 22"><path d="M7 1l14 3v12L7 14z" fill="#dcdccc" stroke="#777"/><path d="M9 4l10 2v8L9 12z" fill="#0f4a18"/><path d="M10 9l3-2 2 3 3-2" stroke="#4dd860" fill="none"/><path d="M2 11l5-2v8l-5 2z" fill="#666"/><path d="M12 16h5l2 4H9z" fill="#bbb"/></svg></button>
    <button class="app open" aria-label="Notepad"><svg viewBox="0 0 24 22"><path d="M8 2h13l-5 16H2z" fill="#74bcd2" stroke="#e8f4f8"/><path d="M21 2l1 16-6 3z" fill="#f7f4e2" stroke="#aaa"/></svg></button>
    <button class="app open active" aria-label="SolidWorks 2017"><svg viewBox="0 0 24 22"><path d="M2 3l8-3 12 2v13l-8 4-12-3z" fill="#d0202a"/><path d="M14 5l8-3v13l-8 4z" fill="#8f1219"/><text x="4" y="13" class="sw">SW</text><text x="6" y="21" class="year">2017</text></svg></button>
    <button class="app open" aria-label="Recorder"><svg viewBox="0 0 24 22"><circle cx="12" cy="11" r="10" fill="#1b1b1b"/><circle cx="12" cy="11" r="6" fill="#f0101a"/></svg></button>
    <div class="glass"></div>
    <div class="tray">
      <span class="tray-up">▴</span>
      <svg viewBox="0 0 16 16"><path d="M1 15v-3h2v3zM4 15v-5h2v5zM7 15V8h2v7zM10 15V5h2v10zM13 15V2h2v13z" fill="#eef4f9" stroke="#456" stroke-width=".5"/></svg>
      <svg viewBox="0 0 16 16"><path d="M1 6h3l4-4v12l-4-4H1z" fill="#fff"/><path d="M10 5q2 3 0 6M12 3q4 5 0 10" stroke="#fff" fill="none"/></svg>
    </div>
    <time class="clock">7:38 AM<br>2/8/2017</time>
    <button class="show-desktop" aria-label="Show desktop"></button>
  </div>

  <!-- floating windows -->
  <section class="window data-window">
    <h2>Simulation Data</h2>
    <div class="window-body">
      <table>
        <thead><tr><th>Name</th><th>Value</th><th></th></tr></thead>
        <tbody>
          <tr><td>X</td><td>28.446</td><td></td></tr>
          <tr><td>Y</td><td>-111.300</td><td></td></tr>
          <tr><td>Z</td><td>-20.200</td><td></td></tr>
          <tr><td>-</td><td>-</td><td></td></tr>
          <tr><td>-</td><td>-</td><td></td></tr>
          <tr><td>Feed</td><td>100.000</td><td></td></tr>
          <tr><td>Spin</td><td>1000.000</td><td></td></tr>
          <tr><td>Step</td><td>152</td><td></td></tr>
          <tr><td>Time</td><td class="time">1:48:24</td><td></td></tr>
          <tr><td></td><td></td><td></td></tr>
          <tr><td></td><td></td><td></td></tr>
        </tbody>
      </table>
    </div>
    <svg class="resize" viewBox="0 0 8 8" aria-hidden="true"><path d="M0 8l8-8M3 8l5-5M6 8l2-2" stroke="#777"/></svg>
  </section>

  <section class="window sim-window">
    <div class="window-head">
      <svg><use href="#i-cam"/></svg>
      <h2>Simulation</h2>
      <div class="caption"><button aria-label="Help">?</button><button class="off" aria-label="Close"><svg viewBox="0 0 16 16"><path d="M3 4l10 8M13 4L3 12" stroke="#bbb" stroke-width="3"/><path d="M3 4l10 8M13 4L3 12" stroke="#fff" stroke-width="1"/></svg></button></div>
    </div>
    <div class="window-body">
      <div class="tab-row"><button>Quick SolidVerify</button><button>Machine Simulation</button></div>
      <div class="tab-row thirds"><button>Host CAD</button><button>2D</button><button>3D</button></div>
      <div class="tab-row lower"><button>Rest Material</button><button>RapidVerify3X</button><button class="current">SolidVerify</button></div>
      <div class="page">
        <div class="options">
          <div class="col">
            <label class="off"><input type="checkbox" checked disabled>Show data</label>
            <button class="push">Stop on next</button>
          </div>
          <fieldset class="color-box">
            <legend><label><input type="checkbox">Single color</label></legend>
            <button class="push" disabled>Color by tool</button>
          </fieldset>
        </div>
        <fieldset class="speed">
          <legend><label for="speed">Simulation speed</label></legend>
          <div class="track"><input type="range" id="speed" min="0" max="9" value="0"></div>
        </fieldset>
        <div class="player">
          <button aria-label="Turbo"><svg viewBox="0 0 12 10"><path d="M1 1v8M3 1v8" stroke="#999"/><path d="M5 1l7 4-7 4z" fill="#999"/></svg></button>
          <button aria-label="Play"><svg viewBox="0 0 12 10"><path d="M2 1l8 4-8 4z" fill="#999"/></svg></button>
          <button aria-label="Pause"><svg viewBox="0 0 12 10"><path d="M4 2h2v6H4zM7 2h2v6H7z" fill="#000"/></svg></button>
          <button aria-label="Single step"><svg viewBox="0 0 12 10"><path d="M1 1l8 4-8 4zM9 1h1v8H9z" fill="#888"/></svg></button>
          <button aria-label="Next operation"><svg viewBox="0 0 12 10"><path d="M1 1l7 4-7 4zM10 1h1v8h-1z" fill="#888"/></svg></button>
          <button aria-label="Exit"><svg viewBox="0 0 12 10"><path d="M6 0l4 7H2zM2 8h8v1H2z" fill="#888"/></svg></button>
        </div>
      </div>
    </div>
  </section>

  <div class="recorder">
    <button aria-label="Menu"><svg viewBox="0 0 10 10"><path d="M1 3h8L5 7z" fill="#fff"/></svg></button>
    <button aria-label="Window"><svg viewBox="0 0 10 10"><path d="M3 4V2h6v4H7M1 4h6v4H1z" fill="none" stroke="#ddd"/></svg></button>
    <button aria-label="Zoom"><svg viewBox="0 0 10 10"><circle cx="4" cy="4" r="3" fill="none" stroke="#ddd"/><path d="M6 6l3 3" stroke="#ddd" stroke-width="1.500"/></svg></button>
    <button aria-label="Full screen"><svg viewBox="0 0 10 10"><path d="M1 1h8v8H1z" fill="none" stroke="#ddd" stroke-dasharray="3 1"/></svg></button>
    <span class="rec-time">Запись [00:08:43]</span>
    <button aria-label="Draw"><svg viewBox="0 0 10 10"><path d="M1 9l1-3 5-5 2 2-5 5z" fill="#fff"/></svg></button>
    <button class="rec" aria-label="Pause recording"><svg viewBox="0 0 10 10"><path d="M2 2h2v7H2zM6 2h2v7H6z" fill="#c80c10"/></svg></button>
    <button class="rec" aria-label="Stop recording"><svg viewBox="0 0 10 10"><path d="M1 1h7v7H1z" fill="#d80c10"/></svg></button>
    <button aria-label="Snapshot"><svg viewBox="0 0 10 10"><path d="M0 3h3l1-2h2l1 2h3v6H0z" fill="#fff"/><circle cx="5" cy="6" r="1.500" fill="#222"/></svg></button>
    <button aria-label="Close recorder" class="rec-close"><svg viewBox="0 0 10 10"><path d="M2 2l6 6M8 2L2 8" stroke="#ddd"/></svg></button>
  </div>
</body>
</html>
```
FILE: styles.css
```
* {
  box-sizing: border-box;
}
body {
  margin: 0;
  height: 100vh;
  display: flex;
  flex-direction: column;
  overflow: hidden;
  background: #eee;
  color: #333;
  font: 7px/12px "Open Sans", sans-serif;
}
button {
  border: 0;
  padding: 0;
  margin: 0;
  background: none;
  color: inherit;
  font: inherit;
  display: flex;
  align-items: center;
  justify-content: center;
}
a {
  color: inherit;
  text-decoration: none;
}
h1, h2 {
  margin: 0;
  font: inherit;
}
.sprite {
  position: absolute;
  width: 0;
  height: 0;
}

/* shared toolbar parts */
.tool {
  width: 17px;
  height: 17px;
  flex: none;
}
.tool svg {
  width: 14px;
  height: 14px;
  flex: none;
}
.tool.on {
  background: #c2c2c2;
  border: 1px solid #8a8a8a;
}
.drop {
  width: 10px;
  height: 17px;
  flex: none;
}
.drop::after, .caret {
  content: "";
  border: 2px solid transparent;
  border-top-color: #555;
  border-bottom: 0;
}
.rule {
  width: 1px;
  height: 17px;
  background: #c4c4c4;
}
.rule.wide {
  margin-right: 3px;
}

/* title bar */
.titlebar {
  height: 21px;
  display: flex;
  align-items: center;
  background: #e5e5e5;
  border-bottom: 1px solid #aaa;
  flex: none;
}
.brand {
  width: 104px;
  height: 20px;
  padding-left: 10px;
  display: flex;
  align-items: center;
  gap: 2px;
  background: linear-gradient(90deg, #e3e3e3, #fafafa 20%, #f4f4f4);
  border-right: 1px solid #d4d4d4;
  color: #c8232c;
}
.brand-mark {
  width: 20px;
  height: 17px;
}
.brand-name {
  font: italic 11px/18px "Open Sans", sans-serif;
}
.main-menu {
  display: flex;
  gap: 9px;
  margin-left: 18px;
  font-size: 8px;
}
.pin {
  margin: 0 3px 0 14px;
}
.pin svg {
  width: 9px;
  height: 9px;
}
.quick {
  display: flex;
  align-items: center;
  height: 20px;
  padding-left: 7px;
  border-left: 2px solid #c4c4c4;
}
.quick .drop {
  width: 9px;
}
.quick .drop.boxed {
  background: #d8d8d8;
  border: 1px solid #aaa;
}
.doc-title {
  flex: 1;
  text-align: center;
  font-size: 7px;
}
.search {
  width: 134px;
  height: 15px;
  display: flex;
  align-items: center;
  gap: 1px;
  padding: 0 2px;
  background: #f4f4f4;
  border: 1px solid #cfcfcf;
}
.search svg {
  width: 12px;
  height: 12px;
  flex: none;
}
.search input {
  flex: 1;
  min-width: 0;
  border: 0;
  padding: 0;
  background: #fff;
  font: inherit;
  font-size: 8px;
}
.search input::placeholder {
  color: #777;
}
.win-buttons {
  display: flex;
  align-items: center;
  padding-left: 4px;
}
.win-buttons button {
  width: 17px;
  height: 17px;
}
.win-buttons .drop {
  width: 10px;
}
.win-buttons svg {
  width: 10px;
  height: 10px;
}
.win-buttons .help-btn {
  width: 14px;
  font-size: 11px;
  font-weight: bold;
}
.minimize::after {
  content: "";
  width: 7px;
  height: 2px;
  margin-top: 6px;
  background: #333;
}

.sketch-bar {
  height: 22px;
  display: flex;
  align-items: center;
  padding-left: 2px;
  background: #f7f7f7;
  border-bottom: 1px solid #999;
  flex: none;
}
.sketch-bar .tool.on {
  background: #aaa;
}

.ribbon-tabs {
  height: 14px;
  display: flex;
  flex: none;
  font-size: 8px;
  line-height: 13px;
}
.ribbon-tabs a {
  padding: 0 4px;
  background: #d2d2d2;
  border-right: 1px solid #999;
  border-bottom: 1px solid #bbb;
}
.ribbon-tabs a:nth-child(-n+4) {
  padding: 0 5px;
}
.ribbon-tabs .current {
  background: #f7f7f7;
  border-bottom-color: #f7f7f7;
  font-weight: 600;
}

/* feature tree panel */
.workspace {
  flex: 1;
  min-height: 0;
  display: flex;
}
.side {
  width: 182px;
  flex: none;
  background: #fff;
  border-right: 5px double #bbb;
}
.side-grip {
  height: 15px;
  display: flex;
  align-items: center;
  justify-content: center;
  background: #f7f7f7;
}
.side-grip i {
  width: 4px;
  height: 4px;
  border: 1px solid #888;
  border-radius: 50%;
}
.side-tabs {
  height: 18px;
  display: flex;
  background: #f7f7f7;
  border-bottom: 1px solid #888;
}
.side-tabs button {
  width: 27px;
  height: 17px;
  background: #cfcfcf;
  border: 1px solid #999;
  border-width: 1px 1px 0 0;
}
.side-tabs .current {
  height: 18px;
  background: #fff;
}
.side-tabs svg {
  width: 13px;
  height: 13px;
}
.cam-tree {
  list-style: none;
  margin: 0;
  padding: 1px 0 0 6px;
  font: 7px/12px "DejaVu Sans Condensed", "DejaVu Sans", sans-serif;
}
.cam-tree li {
  height: 12px;
  display: flex;
  align-items: center;
}
.cam-tree svg {
  width: 12px;
  height: 12px;
  margin-right: 4px;
}
.cam-tree .box {
  width: 6px;
  height: 6px;
  margin-right: 6px;
  border: 1px solid #999;
  font-size: 6px;
  line-height: 4px;
  text-align: center;
}
.cam-tree .dash {
  width: 8px;
  margin: 0 2px;
  border-top: 1px dotted #999;
}
.cam-tree .child {
  margin-left: 18px;
  border-left: 1px dotted #999;
}
.cam-tree .child::before {
  content: "";
  width: 7px;
  margin-right: 2px;
  border-top: 1px dotted #999;
}
.cam-tree .child svg {
  margin-right: 2px;
}
.cam-tree .inner {
  padding-left: 15px;
}

/* simulation view */
.sim {
  flex: 1;
  min-width: 0;
  display: flex;
  flex-direction: column;
  position: relative;
}
.sim-menu {
  height: 16px;
  display: flex;
  gap: 8px;
  padding-left: 4px;
  font-size: 8px;
  line-height: 15px;
}
.off {
  color: #aaa;
}
.sim-bar {
  height: 18px;
  display: flex;
  align-items: center;
  padding-left: 4px;
  border-bottom: 1px solid #ccc;
}
.sim-bar.second {
  height: 22px;
  border-bottom: 1px solid #888;
}
.sim-bar .tool {
  width: 15px;
  height: 15px;
}
.sim-bar .tool svg {
  width: 12px;
  height: 12px;
}
.sim-bar .tool.on {
  background: #dedede;
  border-radius: 2px;
}
.sim-bar .rule {
  height: 12px;
  margin: 0 3px 0 2px;
  background: #aaa;
}
.grip {
  width: 4px;
  height: 12px;
  margin: 0 3px;
  border: 1px solid #d0d0d0;
  border-width: 0 1px;
}
.viewport {
  flex: 1;
  min-height: 0;
  background: linear-gradient(#fff, #f3f4f6 25%, #dfe0e6 62%, #cbcbd5);
  border-bottom: 2px solid #999;
  border-left: 1px solid #888;
}
.scene {
  display: block;
  width: 100%;
  height: 100%;
}
.scene text {
  font: 7px "Liberation Sans", sans-serif;
}
.task-pane {
  position: absolute;
  top: 20px;
  right: 0;
  width: 17px;
  border: 1px solid #888;
  border-right: 0;
}
.task-pane button {
  width: 16px;
  height: 16px;
  background: #ccc;
  border-bottom: 1px solid #999;
}
.task-pane .current {
  background: #f7f7f7;
}
.task-pane svg {
  width: 13px;
  height: 13px;
}

.model-tabs {
  height: 12px;
  display: flex;
  flex: none;
  background: #f5f5f5;
  font-size: 8px;
  line-height: 11px;
}
.tab-nav {
  display: flex;
}
.tab-nav button {
  width: 11px;
  background: #bbb;
  border: 1px solid #999;
  color: #888;
  font-size: 6px;
}
.model-tabs a {
  padding: 0 5px;
  background: #d2d2d2;
  border-right: 1px solid #999;
}
.model-tabs .current {
  padding: 0 7px;
  background: #fff;
  font-weight: bold;
}

.status {
  height: 12px;
  display: flex;
  align-items: center;
  padding: 0 2px;
  background: #e9e9e9;
  border-top: 1px solid #c8c8c8;
  flex: none;
}
.edition {
  flex: 1;
}
.cell {
  padding: 0 8px;
  border-right: 1px solid #d5d5d5;
}
.units {
  padding: 0 6px 0 28px;
  border: 0;
}
.up {
  width: 14px;
  text-align: center;
}
.status svg {
  width: 11px;
  height: 11px;
  margin-left: 40px;
}

/* taskbar */
.taskbar {
  height: 27px;
  display: flex;
  align-items: center;
  flex: none;
  background: linear-gradient(#7d95ae, #b7d3f4 2px, #abcbf0 60%, #b3d3f8);
}
.start {
  width: 39px;
  height: 26px;
  background: linear-gradient(90deg, #7f9fc0, #a8c8ec);
}
.start svg {
  width: 25px;
  height: 25px;
}
.app {
  width: 41px;
  height: 26px;
  flex: none;
}
.app svg {
  width: 24px;
  height: 21px;
}
.app.open {
  background: linear-gradient(135deg, #dcebfb, #b4d0f0);
  border: 1px solid #7d9bbd;
  border-radius: 2px;
}
.app.active {
  background: linear-gradient(135deg, #fff, #d4e5f8);
}
.sw {
  font: bold 10px "Liberation Sans", sans-serif;
  fill: #fff;
}
.year {
  font: bold 7px "Liberation Sans", sans-serif;
  fill: #fff;
  stroke: #222;
  stroke-width: 2px;
  paint-order: stroke;
}
.glass {
  flex: 1;
  height: 20px;
  margin: 0 0 6px 24px;
  background: #abcbee;
  border-bottom: 2px solid #9dbddf;
  border-left: 2px solid #9dbddf;
  border-radius: 0 0 0 5px;
}
.tray {
  height: 26px;
  display: flex;
  align-items: center;
  gap: 5px;
  padding: 0 7px 0 22px;
  color: #fff;
  background: linear-gradient(90deg, #abcbee, #8099b7 20px, #6f8cae 80%, #7d9cc0);
}
.tray svg {
  width: 12px;
  height: 12px;
}
.clock {
  width: 49px;
  height: 26px;
  padding-right: 4px;
  text-align: center;
  font-size: 7px;
  line-height: 12px;
  color: #fff;
  background: #7d9cc0;
}
.show-desktop {
  width: 9px;
  height: 26px;
  background: linear-gradient(#8ea9c6, #64819f);
  border: 1px solid #5f7b98;
}

/* floating windows */
.window {
  position: absolute;
  background: linear-gradient(90deg, #fff 70%, #e4f6f8);
  border: 1px solid #666;
  border-radius: 5px;
  box-shadow: 0 0 3px rgba(0, 0, 0, 0.5);
  font: 7px/11px "DejaVu Sans Condensed", "DejaVu Sans", sans-serif;
}
.window h2 {
  font: 8px/17px "Open Sans", sans-serif;
}
.window-body {
  border: 1px solid #999;
  background: #f0f0f0;
}
.data-window {
  left: 30px;
  top: 125px;
  width: 158px;
  padding: 0 5px 4px;
}
.data-window .window-body {
  padding: 3px 4px 5px;
}
.data-window table {
  width: 100%;
  height: 143px;
  border-collapse: collapse;
  table-layout: fixed;
  background: #fff;
  border: 1px solid #888;
}
.data-window th, .data-window td {
  height: 11px;
  padding: 0 0 0 4px;
  border: 1px solid #eee;
  font-weight: normal;
  line-height: 10px;
  text-align: left;
}
.data-window th {
  height: 16px;
}
.data-window th:first-child {
  width: 64px;
}
.data-window th:last-child {
  width: 11px;
}
.data-window .time {
  padding-left: 8px;
}
.resize {
  position: absolute;
  right: 4px;
  bottom: 4px;
  width: 7px;
  height: 7px;
}

.sim-window {
  left: 26px;
  top: 310px;
  width: 166px;
  padding: 0 4px 4px;
}
.window-head {
  height: 18px;
  display: flex;
  align-items: center;
  gap: 3px;
  padding-bottom: 2px;
}
.window-head svg {
  width: 12px;
  height: 12px;
}
.caption {
  display: flex;
  margin-left: auto;
  align-self: flex-start;
  border: 1px solid #999;
  border-top: 0;
  border-radius: 0 0 3px 3px;
}
.caption button {
  width: 19px;
  height: 11px;
  font-size: 9px;
}
.caption .off {
  width: 31px;
  border-left: 1px solid #999;
}
.sim-window .window-body {
  padding: 6px 3px 2px 6px;
}
.tab-row {
  display: grid;
  grid-template-columns: 67fr 79fr;
}
.tab-row.thirds {
  grid-template-columns: 55fr 45fr 45fr;
}
.tab-row.lower {
  grid-template-columns: 50fr 53fr 43fr;
}
.tab-row button {
  height: 12px;
  color: #888;
  border-right: 1px solid #777;
  border-top: 1px solid #fafafa;
  white-space: nowrap;
}
.tab-row .current {
  color: #222;
  background: #fff;
}
.page {
  padding: 5px 7px 14px;
  background: #fff;
  border: 1px solid #777;
  border-width: 0 1px 1px 0;
}
.options {
  display: flex;
  justify-content: space-between;
}
.col label, legend label {
  display: flex;
  align-items: center;
  gap: 2px;
  height: 13px;
}
.options input {
  width: 9px;
  height: 9px;
  margin: 0;
}
.col .off {
  color: #888;
}
.push {
  width: 54px;
  height: 15px;
  margin-top: 4px;
  background: linear-gradient(#f4f4f4, #dadada);
  border: 1px solid #777;
  border-radius: 2px;
  color: #222;
}
.push:disabled {
  background: #f6f6f6;
  border-color: #ccc;
  color: #999;
}
fieldset {
  margin: 0;
  padding: 0 5px 5px;
  min-width: 0;
  border: 1px solid #ddd;
  border-radius: 2px;
}
legend {
  padding: 0 1px;
}
.speed {
  margin-top: 44px;
  padding: 4px 4px 10px;
}
.track {
  height: 21px;
  padding: 2px 4px 0;
  border: 1px solid #ccc;
  border-color: #666 #ccc #ccc #666;
  background: repeating-linear-gradient(90deg, #ccc 0 1px, transparent 1px 11px) 9px 4px / 102px 3px no-repeat;
}
.track input {
  width: 100%;
  height: 18px;
  margin: 0;
  display: block;
  appearance: none;
  background: linear-gradient(#bbb, #bbb) 0 11px / 100% 1px no-repeat;
}
.track input::-webkit-slider-thumb {
  appearance: none;
  width: 8px;
  height: 12px;
  margin-top: 4px;
  background: #eee;
  border: 1px solid #777;
  border-radius: 4px 4px 2px 2px;
}
.player {
  display: flex;
  justify-content: space-between;
  padding: 9px 7px 0 6px;
}
.player svg {
  width: 12px;
  height: 10px;
}

.recorder {
  position: absolute;
  left: 534px;
  bottom: 28px;
  width: 234px;
  height: 14px;
  display: flex;
  align-items: center;
  padding: 0 2px;
  background: linear-gradient(#333, #0a0a0a);
  color: #eee;
  font: 7px/14px "DejaVu Sans Condensed", "DejaVu Sans", sans-serif;
}
.recorder button {
  width: 14px;
}
.recorder svg {
  width: 8px;
  height: 8px;
}
.rec-time {
  flex: 1;
  text-align: center;
}
.recorder .rec {
  width: 16px;
}
```
